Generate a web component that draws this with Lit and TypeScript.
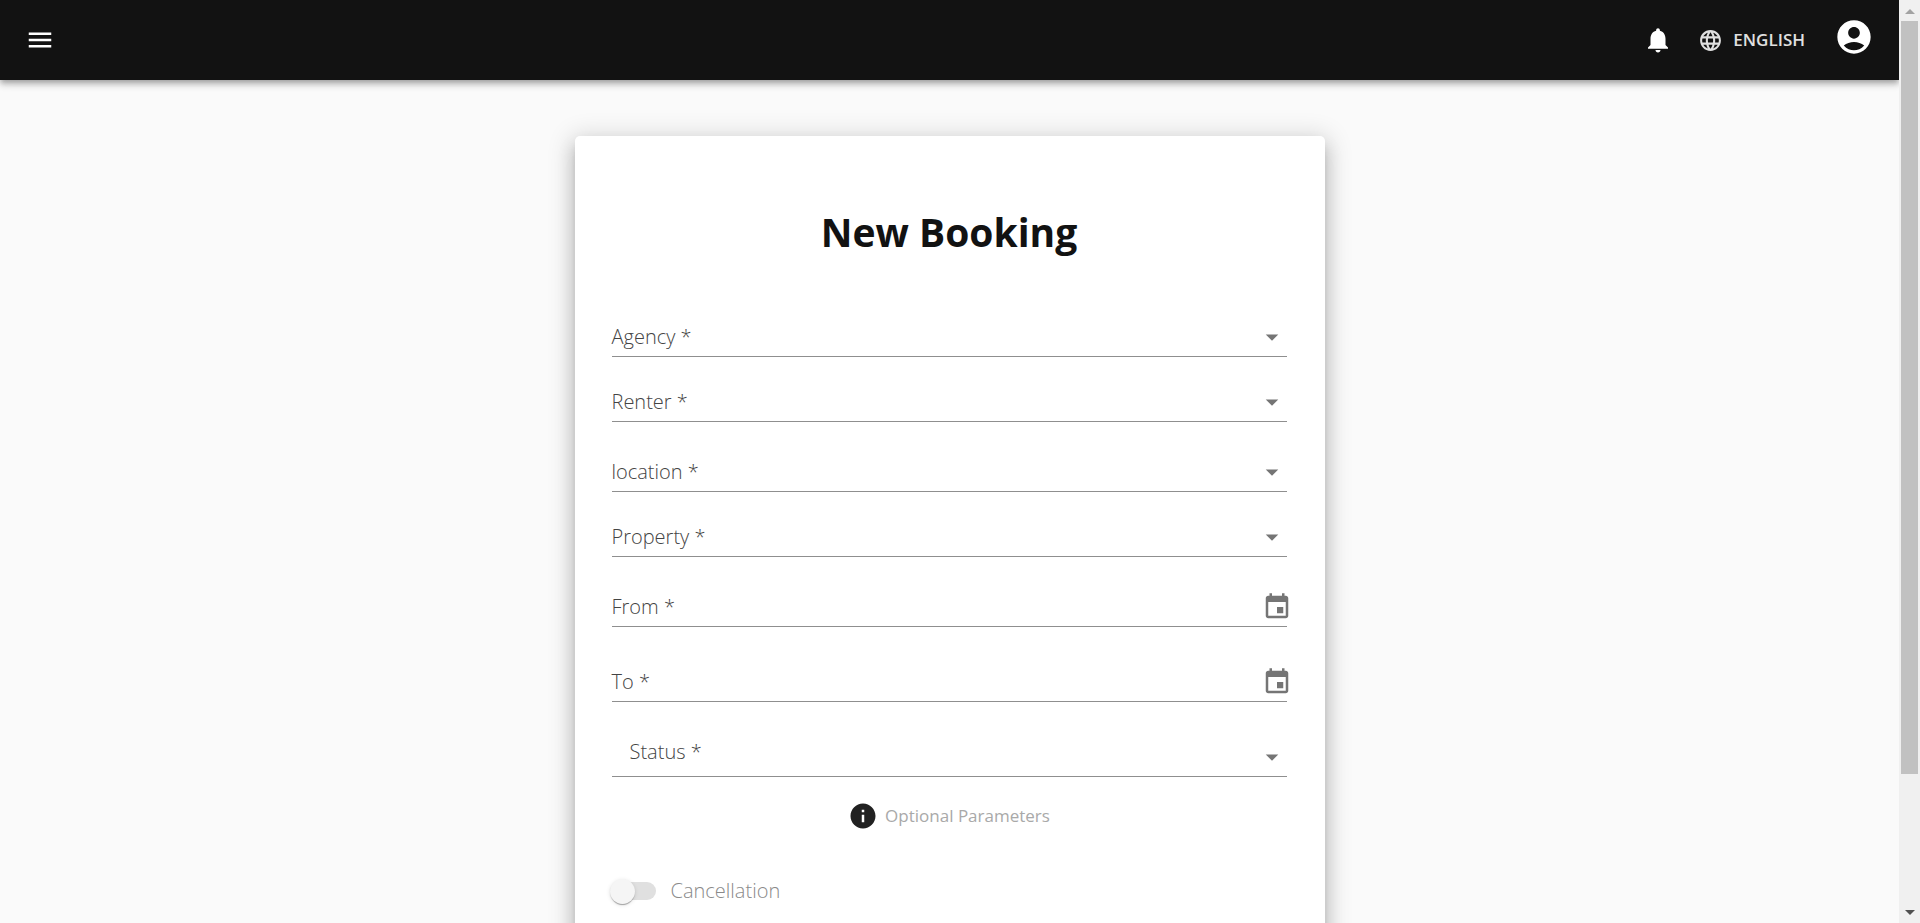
import { LitElement, html, css, svg } from "lit";
import { customElement } from "lit/decorators.js";

const icons = {
  menu: "M3 18h18v-2H3v2zm0-5h18v-2H3v2zm0-7v2h18V6H3z",
  bell: "M12 22c1.1 0 2-.9 2-2h-4c0 1.1.89 2 2 2zm6-6v-5c0-3.07-1.64-5.64-4.5-6.32V4c0-.83-.67-1.5-1.5-1.5s-1.5.67-1.5 1.5v.68C7.63 5.36 6 7.92 6 11v5l-2 2v1h16v-1l-2-2z",
  globe:
    "M11.99 2C6.47 2 2 6.48 2 12s4.47 10 9.99 10C17.52 22 22 17.52 22 12S17.52 2 11.99 2zm6.93 6h-2.95c-.32-1.25-.78-2.45-1.38-3.56 1.84.63 3.37 1.91 4.33 3.56zM12 4.04c.83 1.2 1.48 2.53 1.91 3.96h-3.82c.43-1.43 1.08-2.76 1.91-3.96zM4.26 14C4.1 13.36 4 12.69 4 12s.1-1.36.26-2h3.38c-.08.66-.14 1.32-.14 2 0 .68.06 1.34.14 2H4.26zm.82 2h2.95c.32 1.25.78 2.45 1.38 3.56-1.84-.63-3.37-1.9-4.33-3.56zm2.95-8H5.08c.96-1.66 2.49-2.93 4.33-3.56C8.81 5.55 8.35 6.75 8.03 8zM12 19.96c-.83-1.2-1.48-2.53-1.91-3.96h3.82c-.43 1.43-1.08 2.76-1.91 3.96zM14.34 14H9.66c-.09-.66-.16-1.32-.16-2 0-.68.07-1.35.16-2h4.68c.09.65.16 1.32.16 2 0 .68-.07 1.34-.16 2zm.25 5.56c.6-1.11 1.06-2.31 1.38-3.56h2.95c-.96 1.65-2.49 2.93-4.33 3.56zM16.36 14c.08-.66.14-1.32.14-2 0-.68-.06-1.34-.14-2h3.38c.16.64.26 1.31.26 2s-.1 1.36-.26 2h-3.38z",
  account:
    "M12 2C6.48 2 2 6.48 2 12s4.48 10 10 10 10-4.48 10-10S17.52 2 12 2zm0 4c1.93 0 3.5 1.57 3.5 3.5S13.93 13 12 13s-3.5-1.57-3.5-3.5S10.07 6 12 6zm0 14c-2.03 0-4.43-.82-6.14-2.88C7.55 15.8 9.68 15 12 15s4.45.8 6.14 2.12C16.43 19.18 14.03 20 12 20z",
  arrow: "M7 10l5 5 5-5z",
  calendar:
    "M17 12h-5v5h5v-5zM16 1v2H8V1H6v2H5c-1.11 0-1.99.9-1.99 2L3 19c0 1.1.89 2 2 2h14c1.1 0 2-.9 2-2V5c0-1.1-.9-2-2-2h-1V1h-2zm3 18H5V8h14v11z",
  info: "M12 2C6.48 2 2 6.48 2 12s4.48 10 10 10 10-4.48 10-10S17.52 2 12 2zm1 15h-2v-6h2v6zm0-8h-2V7h2v2z",
};

const icon = (name: keyof typeof icons, cls = "") =>
  html`<svg class="icon ${cls}" viewBox="0 0 24 24" aria-hidden="true">${svg`<path d=${icons[name]}></path>`}</svg>`;

type Field = { id: string; label: string; kind: "select" | "date"; variant: string };

const fields: Field[] = [
  { id: "agency", label: "Agency", kind: "select", variant: "" },
  { id: "renter", label: "Renter", kind: "select", variant: "" },
  { id: "location", label: "location", kind: "select", variant: "loose" },
  { id: "property", label: "Property", kind: "select", variant: "" },
  { id: "from", label: "From", kind: "date", variant: "loose" },
  { id: "to", label: "To", kind: "date", variant: "wide" },
  { id: "status", label: "Status", kind: "select", variant: "wide inset" },
];

const base = css`
  *,
  *::before {
    box-sizing: border-box;
  }
  button {
    display: flex;
    align-items: center;
    padding: 0;
    border: 0;
    background: none;
    color: inherit;
    font: inherit;
    cursor: pointer;
  }
  .icon {
    display: block;
    flex: none;
    width: 30px;
    height: 30px;
    fill: currentColor;
  }
`;

@customElement("app-header")
export class AppHeader extends LitElement {
  static styles = [
    base,
    css`
      :host {
        display: block;
        position: relative;
        z-index: 1;
      }
      .bar {
        display: flex;
        align-items: center;
        gap: 25px;
        height: 80px;
        padding: 0 25px;
        background: #121212;
        color: #fff;
        box-shadow:
          0 3px 5px -1px rgba(0, 0, 0, 0.2),
          0 5px 6px 0 rgba(0, 0, 0, 0.14),
          0 1px 12px 0 rgba(0, 0, 0, 0.12);
      }
      .menu {
        margin-right: auto;
      }
      .language {
        gap: 10px;
        padding-right: 4px;
        color: #e0e0e0;
        font-size: 17px;
        font-weight: 600;
        line-height: 30px;
      }
      .small {
        width: 25px;
        height: 25px;
      }
      .account {
        padding-bottom: 6px;
      }
      .large {
        width: 40px;
        height: 40px;
      }
    `,
  ];

  render() {
    return html`
      <header class="bar">
        <button class="menu" aria-label="Open menu">${icon("menu")}</button>
        <button aria-label="Notifications">${icon("bell")}</button>
        <button class="language">${icon("globe", "small")}<span>ENGLISH</span></button>
        <button class="account" aria-label="Account">${icon("account", "large")}</button>
      </header>
    `;
  }
}

@customElement("booking-form")
export class BookingForm extends LitElement {
  static styles = [
    base,
    css`
      :host {
        display: block;
        width: 750px;
        max-width: 100%;
      }
      .card {
        padding: 71px 38px 120px 37px;
        border-radius: 5px;
        background: #fff;
        box-shadow:
          0 8px 8px -4px rgba(0, 0, 0, 0.2),
          0 12px 18px 1px rgba(0, 0, 0, 0.14),
          0 4px 24px 5px rgba(0, 0, 0, 0.14);
      }
      .title {
        margin: 0 0 60px;
        color: #121212;
        font-size: 39px;
        font-weight: 700;
        line-height: 50px;
        text-align: center;
      }
      .field {
        display: grid;
        grid-template-columns: 1fr 30px;
        align-items: center;
        height: 40px;
        margin-top: 25px;
        border-bottom: 1px solid #8f8f8f;
      }
      .field.loose {
        margin-top: 30px;
      }
      .field.wide {
        margin-top: 35px;
      }
      .label {
        grid-area: 1 / 1;
        color: #444;
        font-size: 20px;
        font-weight: 300;
        line-height: 30px;
        pointer-events: none;
        z-index: 1;
      }
      .inset .label {
        padding: 0 18px 10px;
      }
      .control {
        grid-area: 1 / 1 / 2 / 3;
        width: 100%;
        height: 39px;
        padding: 0;
        border: 0;
        outline: 0;
        appearance: none;
        background: transparent;
        color: #212121;
        font: inherit;
        font-size: 20px;
      }
      .adornment {
        grid-area: 1 / 2;
        color: #757575;
        z-index: 1;
      }
      svg.adornment {
        pointer-events: none;
      }
      .field .pick {
        margin-left: 5px;
      }
      .note {
        display: flex;
        align-items: center;
        justify-content: center;
        gap: 7px;
        margin: 24px 0 0;
        color: #a9a9a9;
        font-size: 17px;
        line-height: 30px;
      }
      .note .icon {
        color: #212121;
      }
      .toggle {
        display: flex;
        align-items: center;
        gap: 15px;
        margin-top: 45px;
        color: #8a8a8a;
        font-size: 20px;
        font-weight: 300;
        line-height: 30px;
      }
      .switch {
        display: flex;
        align-items: center;
        appearance: none;
        width: 42px;
        height: 18px;
        margin: 0 0 0 2px;
        border-radius: 9px;
        background: #e0e0e0;
      }
      .switch::before {
        content: "";
        flex: none;
        width: 25px;
        height: 25px;
        margin-left: -4px;
        border-radius: 50%;
        background: #f5f5f5;
        box-shadow:
          0 2px 1px -1px rgba(0, 0, 0, 0.2),
          0 1px 1px 0 rgba(0, 0, 0, 0.14),
          0 1px 4px 0 rgba(0, 0, 0, 0.12);
      }
    `,
  ];

  private renderField(f: Field) {
    return html`
      <div class="field ${f.variant}">
        <label class="label" for=${f.id}>${f.label} *</label>
        ${f.kind === "select"
          ? html`<select class="control" id=${f.id} required>
                <option value=""></option>
              </select>
              ${icon("arrow", "adornment")}`
          : html`<input class="control" id=${f.id} type="text" required />
              <button class="adornment pick" type="button" aria-label="Choose date">${icon("calendar")}</button>`}
      </div>
    `;
  }

  render() {
    return html`
      <form class="card">
        <h1 class="title">New Booking</h1>
        ${fields.map((f) => this.renderField(f))}
        <p class="note">${icon("info")}<span>Optional Parameters</span></p>
        <div class="toggle">
          <input class="switch" id="cancellation" type="checkbox" role="switch" disabled />
          <label for="cancellation">Cancellation</label>
        </div>
      </form>
    `;
  }
}

@customElement("app-root")
export class AppRoot extends LitElement {
  static styles = [
    base,
    css`
      :host {
        display: grid;
        grid-template-columns: minmax(0, 1fr) 21px;
        height: 100vh;
        overflow: hidden;
        background: #fafafa;
        font-family: "Open Sans", "Noto Sans", sans-serif;
      }
      .page {
        min-height: 0;
        overflow: auto;
        scrollbar-width: none;
      }
      .content {
        display: flex;
        justify-content: center;
        padding: 56px 0;
      }
      .scrollbar {
        display: flex;
        flex-direction: column;
        align-items: center;
        padding: 0 2px;
        background: #f0f0f0;
      }
      .track {
        flex: 1;
        width: 100%;
      }
      .thumb {
        width: 100%;
        height: 85.5%;
        background: #c1c1c1;
      }
      .cap {
        display: block;
        width: 17px;
        height: 21px;
      }
      .up {
        fill: #a3a3a3;
      }
      .down {
        fill: #505050;
      }
    `,
  ];

  render() {
    return html`
      <div class="page">
        <app-header></app-header>
        <main class="content"><booking-form></booking-form></main>
      </div>
      <div class="scrollbar" aria-hidden="true">
        <svg class="cap up" viewBox="0 0 17 21"><path d="M4 14l5-5 5 5z"></path></svg>
        <div class="track"><div class="thumb"></div></div>
        <svg class="cap down" viewBox="0 0 17 21"><path d="M4 8l5 5 5-5z"></path></svg>
      </div>
    `;
  }
}
